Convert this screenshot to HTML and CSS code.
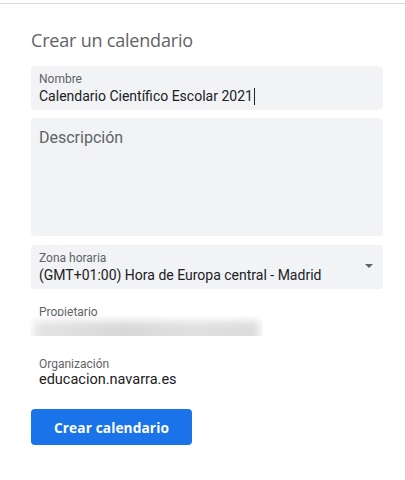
FILE: index.html
```html
<!DOCTYPE html>
<html lang="es">
<head>
<meta charset="utf-8">
<link rel="stylesheet" href="styles.css">
</head>
<body>
<div class="topline"></div>
<main class="panel">
  <h1 class="title">Crear un calendario</h1>
  <div class="field">
    <div class="label">Nombre</div>
    <div class="value">Calendario Científico Escolar 2021<span class="caret"></span></div>
  </div>
  <div class="field textarea">
    <div class="placeholder">Descripción</div>
  </div>
  <div class="field select">
    <div class="label">Zona horaria</div>
    <div class="value">(GMT+01:00) Hora de Europa central - Madrid</div>
    <span class="arrow"></span>
  </div>
  <div class="info owner">
    <div class="label">Propietario</div>
    <div class="blur"><div class="blur-inner"></div></div>
  </div>
  <div class="info org">
    <div class="label">Organización</div>
    <div class="value">educacion.navarra.es</div>
  </div>
  <button class="btn">Crear calendario</button>
</main>
</body>
</html>
```

FILE: styles.css
```css
html, body {
  margin: 0;
  padding: 0;
  background: #fff;
  font-family: Roboto, "Liberation Sans", Arial, sans-serif;
  color: #202124;
}
.topline {
  height: 3px;
  border-bottom: 1px solid #dadce0;
}
.panel {
  padding: 24px 22px 0 31px;
  display: flex;
  flex-direction: column;
}
.title {
  margin: 0 0 14px 0;
  font-family: "Open Sans", Roboto, sans-serif;
  font-weight: 400;
  font-size: 18px;
  line-height: 24px;
  color: #5f6368;
  letter-spacing: -0.2px;
}
.field {
  position: relative;
  background: #f1f3f4;
  border-radius: 4px;
  padding: 6px 8px 0 8px;
  box-sizing: border-box;
  height: 44px;
  margin-bottom: 8px;
}
.label {
  font-size: 12px;
  line-height: 14px;
  color: #5f6368;
}
.value {
  font-size: 14px;
  line-height: 20px;
  color: #202124;
  display: flex;
  align-items: center;
}
.caret {
  display: inline-block;
  width: 1px;
  height: 17px;
  background: #202124;
  margin-left: 1px;
}
.textarea {
  height: 118px;
  padding-top: 10px;
  margin-bottom: 9px;
}
.placeholder {
  font-size: 16px;
  line-height: 20px;
  color: #5f6368;
}
.select .arrow {
  position: absolute;
  right: 10px;
  top: 19px;
  width: 0;
  height: 0;
  border-left: 4px solid transparent;
  border-right: 4px solid transparent;
  border-top: 4px solid #5f6368;
}
.info {
  padding-left: 8px;
}
.owner {
  margin-top: 8px;
  height: 45px;
  position: relative;
}
.owner .label {
  line-height: 15px;
}
.blur {
  position: absolute;
  left: -1px;
  top: 11px;
  width: 233px;
  height: 20px;
  background: #fff;
  overflow: hidden;
}
.blur-inner {
  position: absolute;
  left: 4px;
  right: 4px;
  top: 5px;
  bottom: -6px;
  background: linear-gradient(90deg, #e3e4e3, #d6d7d6 40%, #dfe0df 70%, #d9dad9);
  filter: blur(4px);
}
.org {
  margin-top: 7px;
}
.org .value {
  font-size: 14.5px;
  line-height: 18px;
}
.btn {
  margin-top: 20px;
  align-self: flex-start;
  width: 161px;
  height: 36px;
  border: 0;
  border-radius: 4px;
  background: #1a73e8;
  color: #fff;
  font-family: "Open Sans", Roboto, sans-serif;
  font-weight: 700;
  font-size: 13.7px;
  letter-spacing: 0.1px;
  padding: 0;
}
```
